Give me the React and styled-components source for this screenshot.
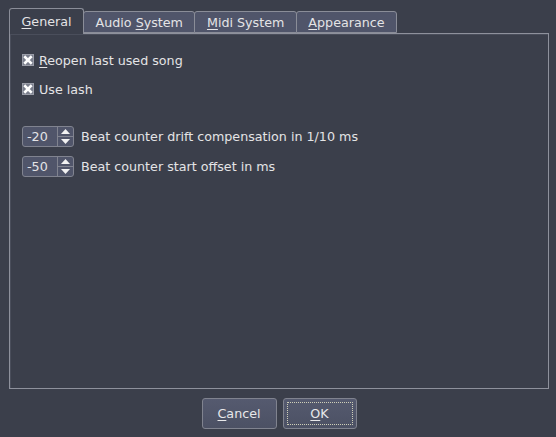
import { useState } from 'react'
import styled, { createGlobalStyle } from 'styled-components'

const GlobalStyle = createGlobalStyle`
  html, body {
    margin: 0;
    padding: 0;
    background: #3b3f4b;
  }
  body {
    font-family: "DejaVu Sans", "Liberation Sans", sans-serif;
    font-size: 12.7px;
    color: #e4e4e6;
  }
`;

const Window = styled.div`
  width: 556px;
  height: 437px;
  box-sizing: border-box;
  padding: 8px 7px 8px 9px;
  display: flex;
  flex-direction: column;
`;

const TabBar = styled.div`
  display: flex;
  align-items: flex-end;
  height: 25px;
`;

const Tab = styled.div`
  box-sizing: border-box;
  display: flex;
  align-items: center;
  justify-content: center;
  padding: 0 11.5px;
  white-space: pre;
  border: 1px solid #8a8d98;
  border-radius: 3px 3px 0 0;
  cursor: default;
  height: ${({ $active }) => ($active ? '26px' : '22px')};
  background: ${({ $active }) => ($active ? '#3b3f4b' : '#50556a')};
  border-bottom: ${({ $active }) => ($active ? 'none' : '1px solid #8a8d98')};
  margin-bottom: ${({ $active }) => ($active ? '-1px' : '0')};
  margin-left: ${({ $active }) => ($active ? '0' : '-1px')};
  position: relative;
  z-index: ${({ $active }) => ($active ? 2 : 1)};
  padding-top: ${({ $active }) => ($active ? '0' : '1px')};
`;

const U = styled.span`
  text-decoration: underline;
  text-underline-offset: 2px;
`;

const Panel = styled.div`
  flex: 1;
  box-sizing: border-box;
  border: 1px solid #8e919c;
  box-shadow: inset 1px 1px 0 #4a4e5b;
  padding: 17px 12px 0 12px;
  display: flex;
  flex-direction: column;
`;

const CheckRow = styled.label`
  display: flex;
  align-items: center;
  height: 18px;
  gap: 5px;
  margin-bottom: ${({ $gap }) => $gap}px;
`;

const SpinRow = styled.div`
  display: flex;
  align-items: center;
  height: 21px;
  gap: 7px;
  margin-bottom: ${({ $gap }) => $gap}px;
`;

const CheckBox = styled.span`
  width: 12px;
  height: 12px;
  display: flex;
  flex: none;
  svg {
    display: block;
  }
`;

const Spin = styled.div`
  box-sizing: border-box;
  width: 52px;
  height: 21px;
  display: flex;
  border: 1px solid #80838f;
  border-radius: 3px;
  background: #50556a;
  overflow: hidden;
`;

const SpinValue = styled.div`
  flex: 1;
  display: flex;
  align-items: center;
  padding-left: 4px;
`;

const SpinButtons = styled.div`
  width: 15px;
  display: flex;
  flex-direction: column;
  border-left: 1px solid #80838f;
`;

const SpinButton = styled.div`
  flex: 1;
  display: flex;
  align-items: center;
  justify-content: center;
  border-top: ${({ $down }) => ($down ? '1px solid #80838f' : 'none')};
`;

const ButtonBar = styled.div`
  display: flex;
  justify-content: center;
  gap: 6px;
  padding-top: 9px;
  height: 31px;
  box-sizing: content-box;
`;

const Button = styled.button`
  box-sizing: border-box;
  width: ${({ $w }) => $w}px;
  height: 31px;
  border: 1px solid #80838f;
  border-radius: 3px;
  background: linear-gradient(#555a6f, #4c5164);
  color: #e8e8ea;
  font-family: "DejaVu Sans", "Liberation Sans", sans-serif;
  font-size: 12.7px;
  padding: 3px;
  display: flex;
  cursor: default;
`;

const ButtonInner = styled.span`
  flex: 1;
  display: flex;
  align-items: center;
  justify-content: center;
  border: 1px dotted ${({ $focus }) => ($focus ? '#cfcfb8' : 'transparent')};
  border-radius: 1px;
`;

const CheckIcon = () => (
  <svg width="12" height="12" viewBox="0 0 12 12">
    <rect x="0.5" y="0.5" width="11" height="11" fill="#7a7e8c" stroke="#9a9da8" />
    <path d="M3.2 3.2 L8.8 8.8 M8.8 3.2 L3.2 8.8" stroke="#ffffff" strokeWidth="2.6" strokeLinecap="square" />
  </svg>
)

const Arrow = ({ down }) => (
  <svg width="9" height="5" viewBox="0 0 9 5">
    <path d={down ? 'M0 0 H9 L4.5 5 Z' : 'M0 5 H9 L4.5 0 Z'} fill="#f2f2f2" />
  </svg>
)

const SpinBox = ({ value }) => (
  <Spin>
    <SpinValue>{value}</SpinValue>
    <SpinButtons>
      <SpinButton>
        <Arrow />
      </SpinButton>
      <SpinButton $down>
        <Arrow down />
      </SpinButton>
    </SpinButtons>
  </Spin>
)

export default function App() {
  const [tab, setTab] = useState(0)
  const tabs = [
    <span><U>G</U>eneral</span>,
    <span>Audio <U>S</U>ystem</span>,
    <span><U>M</U>idi System</span>,
    <span><U>A</U>ppearance</span>,
  ]

  return (
    <>
      <GlobalStyle />
      <Window>
        <TabBar>
          {tabs.map((t, i) => (
            <Tab key={i} $active={tab === i} onClick={() => setTab(i)}>
              {t}
            </Tab>
          ))}
        </TabBar>
        <Panel>
          <CheckRow $gap={11}>
            <CheckBox><CheckIcon /></CheckBox>
            <span><U>R</U>eopen last used song</span>
          </CheckRow>
          <CheckRow $gap={28}>
            <CheckBox><CheckIcon /></CheckBox>
            <span>Use lash</span>
          </CheckRow>
          <SpinRow $gap={9}>
            <SpinBox value="-20" />
            <span>Beat counter drift compensation in 1/10 ms</span>
          </SpinRow>
          <SpinRow $gap={0}>
            <SpinBox value="-50" />
            <span>Beat counter start offset in ms</span>
          </SpinRow>
        </Panel>
        <ButtonBar>
          <Button $w={75}>
            <ButtonInner><U>C</U>ancel</ButtonInner>
          </Button>
          <Button $w={74}>
            <ButtonInner $focus><U>O</U>K</ButtonInner>
          </Button>
        </ButtonBar>
      </Window>
    </>
  )
}
